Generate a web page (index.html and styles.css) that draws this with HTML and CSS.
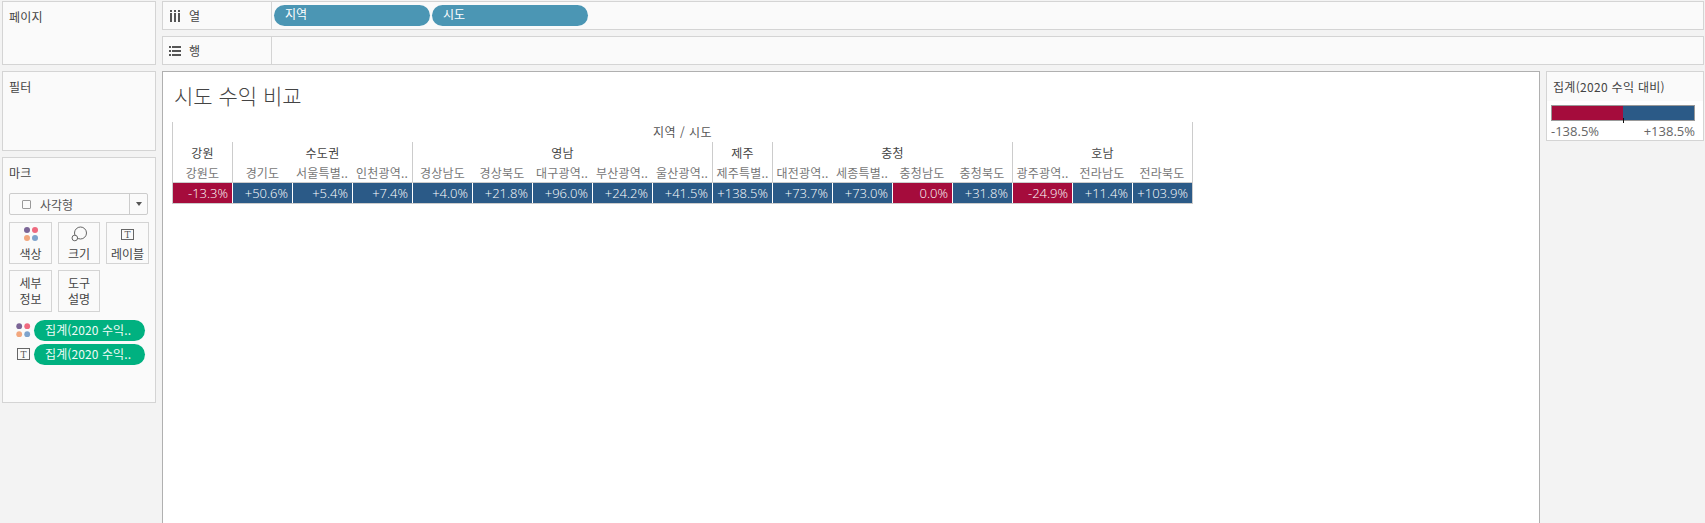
FILE: index.html
```html
<!DOCTYPE html>
<html lang="ko">
<head>
<meta charset="utf-8">
<title>시도 수익 비교</title>
<link rel="stylesheet" href="styles.css">
</head>
<body>
<div class="app">
  <aside class="side">
    <section class="card card-pages"><h2 class="card-title">페이지</h2></section>
    <section class="card card-filters"><h2 class="card-title">필터</h2></section>
    <section class="card card-marks">
      <h2 class="card-title marks-title">마크</h2>
      <div class="mark-select">
        <span class="mark-select-main"><span class="check"></span>사각형</span>
        <span class="mark-select-arrow"><span class="tri"></span></span>
      </div>
      <div class="mark-buttons">
        <div class="mark-btn">
          <svg class="btn-icon" width="16" height="16" viewBox="0 0 16 16"><circle cx="4" cy="4" r="3" fill="#7b6596"/><circle cx="12" cy="4" r="3" fill="#ef6a7f"/><circle cx="4" cy="12" r="3" fill="#f2a77e"/><circle cx="12" cy="12" r="3" fill="#7ea3cc"/></svg>
          <span>색상</span>
        </div>
        <div class="mark-btn">
          <svg class="btn-icon" width="16" height="16" viewBox="0 0 16 16"><circle cx="9.5" cy="7" r="6" fill="none" stroke="#666"/><circle cx="3.8" cy="12" r="2.8" fill="#fafafa" stroke="#666"/></svg>
          <span>크기</span>
        </div>
        <div class="mark-btn">
          <svg class="btn-icon" width="14" height="14" viewBox="0 0 14 14"><rect x="0.5" y="1.5" width="12" height="10" fill="none" stroke="#666"/><text x="6.5" y="9.5" class="t-glyph">T</text></svg>
          <span>레이블</span>
        </div>
        <div class="mark-btn two-line"><span>세부<br>정보</span></div>
        <div class="mark-btn two-line"><span>도구<br>설명</span></div>
      </div>
      <div class="mark-pills">
        <div class="mark-pill-row">
          <svg class="pill-icon" width="15" height="15" viewBox="0 0 15 15"><circle cx="3.2" cy="3.2" r="2.9" fill="#7b6596"/><circle cx="11.2" cy="3.2" r="2.9" fill="#ef6a7f"/><circle cx="3.2" cy="11.2" r="2.9" fill="#f2a77e"/><circle cx="11.2" cy="11.2" r="2.9" fill="#7ea3cc"/></svg>
          <span class="pill pill-green">집계(2020 수익..</span>
        </div>
        <div class="mark-pill-row">
          <svg class="pill-icon" width="15" height="15" viewBox="0 0 15 15"><rect x="1.5" y="1.5" width="12" height="11" fill="none" stroke="#666"/><text x="7.5" y="10.5" class="t-glyph">T</text></svg>
          <span class="pill pill-green">집계(2020 수익..</span>
        </div>
      </div>
    </section>
  </aside>
  <main class="workspace">
    <div class="shelves">
      <div class="shelf">
        <div class="shelf-label">
          <svg class="shelf-icon" width="12" height="12" viewBox="0 0 12 12"><path d="M1 0h2v2H1zM5 0h2v2H5zM9 0h2v2H9zM1 3h2v9H1zM5 3h2v9H5zM9 3h2v9H9z" fill="#555"/></svg>
          <span>열</span>
        </div>
        <div class="shelf-body">
          <span class="pill pill-blue">지역</span>
          <span class="pill pill-blue">시도</span>
        </div>
      </div>
      <div class="shelf">
        <div class="shelf-label">
          <svg class="shelf-icon" width="12" height="12" viewBox="0 0 12 12"><path d="M0 1h2v2H0zM3 1h9v2H3zM0 5h2v2H0zM3 5h9v2H3zM0 9h2v2H0zM3 9h9v2H3z" fill="#555"/></svg>
          <span>행</span>
        </div>
        <div class="shelf-body"></div>
      </div>
    </div>
    <div class="stage">
      <div class="view">
        <h1 class="view-title">시도 수익 비교</h1>
        <div class="crosstab">
          <div class="axis-title">지역 / 시도</div>
          <div class="region span-1">강원</div>
          <div class="region span-3">수도권</div>
          <div class="region span-5">영남</div>
          <div class="region span-1">제주</div>
          <div class="region span-4">충청</div>
          <div class="region span-3">호남</div>

          <div class="prov group-start">강원도</div>
          <div class="prov group-start">경기도</div>
          <div class="prov">서울특별..</div>
          <div class="prov">인천광역..</div>
          <div class="prov group-start">경상남도</div>
          <div class="prov">경상북도</div>
          <div class="prov">대구광역..</div>
          <div class="prov">부산광역..</div>
          <div class="prov">울산광역..</div>
          <div class="prov group-start">제주특별..</div>
          <div class="prov group-start">대전광역..</div>
          <div class="prov">세종특별..</div>
          <div class="prov">충청남도</div>
          <div class="prov">충청북도</div>
          <div class="prov group-start">광주광역..</div>
          <div class="prov">전라남도</div>
          <div class="prov">전라북도</div>

          <div class="val neg first">-13.3%</div>
          <div class="val pos">+50.6%</div>
          <div class="val pos">+5.4%</div>
          <div class="val pos">+7.4%</div>
          <div class="val pos">+4.0%</div>
          <div class="val pos">+21.8%</div>
          <div class="val pos">+96.0%</div>
          <div class="val pos">+24.2%</div>
          <div class="val pos">+41.5%</div>
          <div class="val pos">+138.5%</div>
          <div class="val pos">+73.7%</div>
          <div class="val pos">+73.0%</div>
          <div class="val neg">0.0%</div>
          <div class="val pos">+31.8%</div>
          <div class="val neg">-24.9%</div>
          <div class="val pos">+11.4%</div>
          <div class="val pos">+103.9%</div>
        </div>
      </div>
      <aside class="legend">
        <h2 class="legend-title">집계(2020 수익 대비)</h2>
        <div class="legend-body">
          <div class="ramp"><span class="ramp-neg"></span><span class="ramp-pos"></span><span class="ramp-tick"></span></div>
          <div class="ramp-labels"><span>-138.5%</span><span>+138.5%</span></div>
        </div>
      </aside>
    </div>
  </main>
</div>
</body>
</html>
```
FILE: styles.css
```css
* { box-sizing: border-box; }
html, body { margin: 0; padding: 0; height: 100%; overflow: hidden; }
body {
  background: #f3f3f3;
  color: #333;
  font-family: "Noto Sans CJK KR", "Noto Sans", sans-serif;
  font-size: 12px;
}
h1, h2 { margin: 0; font-weight: 400; }

.app {
  display: flex;
  gap: 6px;
  padding: 1px 1px 0 2px;
  height: 523px;
}

/* left column */
.side {
  width: 154px;
  flex: none;
  display: flex;
  flex-direction: column;
  gap: 6px;
}
.card {
  background: #fafafa;
  border: 1px solid #d4d4d4;
}
.card-pages { height: 64px; }
.card-filters { height: 80px; }
.card-marks { height: 246px; padding: 0 6px; }
.card-title {
  font-size: 12px;
  line-height: 16px;
  padding: 7px 0 0 6px;
  color: #444;
  letter-spacing: 0.2px;
}
.marks-title { padding: 7px 0 0 0; }

.mark-select {
  margin-top: 12px;
  width: 139px;
  height: 22px;
  border: 1px solid #ccc;
  border-radius: 2px;
  display: flex;
  background: #fafafa;
}
.mark-select-main {
  flex: 1;
  display: flex;
  align-items: center;
  padding-left: 12px;
  gap: 9px;
  color: #555;
  font-size: 12px;
}
.check {
  width: 9px;
  height: 9px;
  border: 1px solid #999;
  background: #fafafa;
  border-radius: 1px;
}
.mark-select-arrow {
  width: 18px;
  border-left: 1px solid #ccc;
  display: flex;
  align-items: center;
  justify-content: center;
}
.tri {
  width: 0;
  height: 0;
  border-left: 3.5px solid transparent;
  border-right: 3.5px solid transparent;
  border-top: 4px solid #555;
}

.mark-buttons {
  display: grid;
  grid-template-columns: 43px 42px 43px;
  grid-auto-rows: 42px;
  gap: 6px 6px;
  margin-top: 7px;
}
.mark-btn {
  border: 1px solid #d4d4d4;
  display: flex;
  flex-direction: column;
  align-items: center;
  justify-content: flex-end;
  text-align: center;
  color: #444;
  line-height: 16px;
  padding-bottom: 1px;
}
.btn-icon { margin-bottom: 4px; }
.two-line { justify-content: flex-start; padding: 4px 0 0; }
.t-glyph {
  font-family: "DejaVu Serif", "Liberation Serif", serif;
  font-size: 9px;
  font-weight: 400;
  fill: #555;
  text-anchor: middle;
}

.mark-pills {
  display: flex;
  flex-direction: column;
  gap: 3px;
  margin-top: 8px;
}
.mark-pill-row {
  display: flex;
  align-items: center;
  padding-left: 7px;
}
.pill-icon { flex: none; margin-right: 3px; }

.pill {
  display: block;
  height: 21px;
  border-radius: 10.5px;
  color: #fff;
  font-size: 12px;
  line-height: 19px;
}
.pill-green {
  background: #00b180;
  width: 111px;
  padding-left: 11px;
  color: #eefaf6;
  letter-spacing: 0.1px;
}
.pill-blue {
  background: #4b96b4;
  width: 156px;
  padding-left: 11px;
  line-height: 17px;
}

/* workspace */
.workspace {
  flex: 1;
  min-width: 0;
  display: flex;
  flex-direction: column;
  gap: 6px;
}
.shelves {
  display: flex;
  flex-direction: column;
  gap: 6px;
}
.shelf {
  height: 29px;
  background: #fafafa;
  border: 1px solid #d4d4d4;
  display: flex;
}
.shelf-label {
  width: 109px;
  flex: none;
  border-right: 1px solid #d4d4d4;
  display: flex;
  align-items: center;
  padding-left: 6px;
  gap: 8px;
  color: #444;
}
.shelf-body {
  flex: 1;
  display: flex;
  align-items: flex-start;
  padding: 3px 0 0 2px;
  gap: 2px;
}

.stage {
  flex: 1;
  display: flex;
  gap: 6px;
  align-items: flex-start;
  min-height: 0;
}
.view {
  width: 1378px;
  height: 470px;
  background: #fff;
  border: 1px solid #b0b0b0;
  flex: none;
  padding-left: 9px;
}
.view-title {
  font-size: 21px;
  font-weight: 300;
  line-height: 30px;
  height: 50px;
  padding: 8px 0 0 2px;
  color: #444;
}

.crosstab {
  display: grid;
  grid-template-columns: repeat(17, 60px);
  grid-template-rows: 20px 20px 21px 20px;
  width: 1021px;
  border-right: 1px solid #ccc;
  border-bottom: 1px solid #ccc;
}
.axis-title {
  grid-column: 1 / -1;
  text-align: center;
  line-height: 20px;
  color: #555;
  letter-spacing: 0.5px;
  border-left: 1px solid #ccc;
}
.region {
  text-align: center;
  line-height: 22px;
  color: #444;
  letter-spacing: 0.3px;
  border-left: 1px solid #ccc;
}
.span-1 { grid-column: span 1; }
.span-3 { grid-column: span 3; }
.span-4 { grid-column: span 4; }
.span-5 { grid-column: span 5; }
.prov {
  text-align: center;
  line-height: 22px;
  color: #777;
  letter-spacing: 0.2px;
  border-bottom: 1px solid #ccc;
  white-space: nowrap;
  overflow: hidden;
}
.group-start { border-left: 1px solid #ccc; }
.val {
  color: #fff;
  text-align: right;
  padding-right: 4px;
  line-height: 20px;
  font-size: 13px;
  font-weight: 300;
  font-family: "Open Sans", "Noto Sans", sans-serif;
  border-left: 1px solid #fff;
}
.val.first { border-left-color: #ccc; }
.val.pos { background: #2b5a87; }
.val.neg { background: #a50c3c; }

/* legend */
.legend {
  width: 158px;
  height: 70px;
  flex: none;
  background: #fff;
  border: 1px solid #d4d4d4;
}
.legend-title {
  background: #fafafa;
  height: 29px;
  font-size: 12px;
  line-height: 30px;
  padding-left: 6px;
  color: #444;
  letter-spacing: 0.3px;
}
.legend-body { padding: 4px 8px 0 4px; }
.ramp {
  display: flex;
  position: relative;
  height: 16px;
  width: 144px;
  border: 1px solid #999;
}
.ramp-neg { flex: 1; background: #a50c3c; }
.ramp-pos { flex: 1; background: #2b5a87; }
.ramp-tick {
  position: absolute;
  left: 71px;
  bottom: -3px;
  width: 1px;
  height: 5px;
  background: #111;
}
.ramp-labels {
  display: flex;
  justify-content: space-between;
  width: 144px;
  line-height: 20px;
  font-size: 13px;
  font-weight: 400;
  font-family: "Open Sans", "Noto Sans", sans-serif;
  color: #666;
}
```
